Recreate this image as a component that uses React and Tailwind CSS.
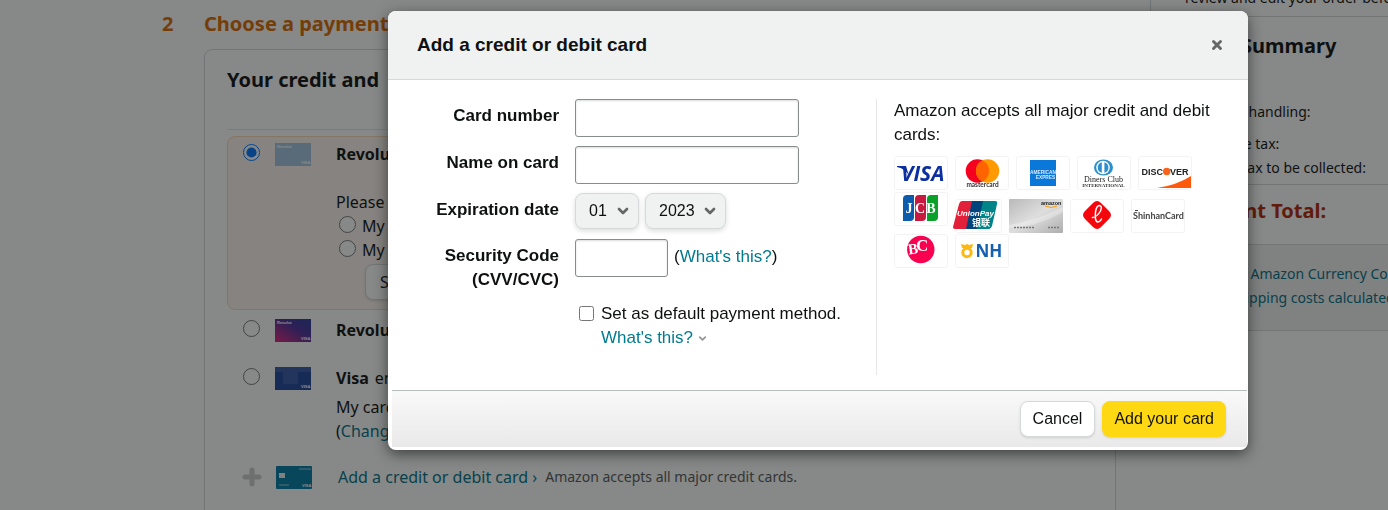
import React, { useState } from 'react';
import { ChevronDown, Plus, X } from 'lucide-react';

const Tile = ({ label, children }) => (
  <svg role="img" aria-label={label} viewBox="0 0 54 34" className="h-[34px] w-[54px] shrink-0" fontFamily="Liberation Sans, sans-serif">
    <rect x="0.5" y="0.5" width="53" height="33" rx="2" fill="#fff" stroke="#f3f3f3" />
    {children}
  </svg>
);

const VisaLogo = () => (
  <Tile label="Visa">
    <path d="M3 10h9l3 10q-3-7-12-9z" fill="#0b2fa0" />
    <text x="7" y="25" fontSize="21" fontWeight="bold" fontStyle="italic" fontFamily="Open Sans, sans-serif" fill="#0b2fa0">VISA</text>
  </Tile>
);

const MastercardLogo = () => (
  <Tile label="Mastercard">
    <circle cx="22.4" cy="15" r="11.7" fill="#f5001f" />
    <circle cx="32.6" cy="15" r="11.7" fill="#ff9a00" />
    <path d="M27.5 4.5a11.7 11.7 0 0 1 0 21a11.7 11.7 0 0 1 0-21z" fill="#ff6400" />
    <text x="27.5" y="31" fontSize="6.5" fontWeight="bold" textAnchor="middle" fontFamily="Lato, sans-serif" fill="#333">mastercard</text>
  </Tile>
);

const AmexLogo = () => (
  <Tile label="American Express">
    <rect x="14" y="4" width="26" height="26" fill="#0a78d9" />
    <text x="27" y="17.5" fontSize="4.8" fontWeight="bold" textAnchor="middle" fill="#d5eaff">AMERICAN</text>
    <text x="29.5" y="22.5" fontSize="4.8" fontWeight="bold" textAnchor="middle" fill="#d5eaff">EXPRES</text>
  </Tile>
);

const DinersLogo = () => (
  <Tile label="Diners Club International">
    <ellipse cx="26.5" cy="11.5" rx="9.5" ry="8" fill="#2b8fcd" />
    <circle cx="26" cy="11.5" r="6.8" fill="#fff" />
    <path d="M24.8 6.2a5.5 5.5 0 0 0 0 10.6zM27.4 6.2a5.5 5.5 0 0 1 0 10.6z" fill="#2b8fcd" />
    <text x="26.5" y="26" fontSize="8" textAnchor="middle" fontFamily="Liberation Serif, serif" fill="#222">Diners Club</text>
    <text x="26.5" y="31" fontSize="5" fontWeight="bold" textAnchor="middle" fontFamily="Liberation Serif, serif" fill="#333">INTERNATIONAL</text>
  </Tile>
);

const DiscoverLogo = () => (
  <Tile label="Discover">
    <path d="M53 20v12H19q20-3 34-12z" fill="#ff5a0a" />
    <circle cx="28.7" cy="15.5" r="3.7" fill="#f9631b" />
    <text x="3.5" y="19" fontSize="9" fontWeight="bold" fill="#222">DISC</text>
    <text x="32" y="19" fontSize="9" fontWeight="bold" fill="#222">VER</text>
  </Tile>
);

const JcbLogo = () => (
  <Tile label="JCB">
    <path d="M13 3h7v22q0 4-4 4H9V7q0-4 4-4z" fill="#0d5bab" />
    <path d="M25 3h7v22q0 4-4 4h-7V7q0-4 4-4z" fill="#c8193f" />
    <path d="M37 3h7v22q0 4-4 4h-7V7q0-4 4-4z" fill="#0ba02a" />
    <g fontSize="14" fontWeight="bold" textAnchor="middle" fontFamily="Liberation Serif, serif" fill="#fff">
      <text x="15" y="21">J</text>
      <text x="26" y="21">C</text>
      <text x="37" y="21">B</text>
    </g>
  </Tile>
);

// UnionPay tile is a little narrower than the others
const UnionPayLogo = () => (
  <svg role="img" aria-label="UnionPay" viewBox="0 0 47 34" className="h-[34px] w-[47px] shrink-0 overflow-visible" fontFamily="Liberation Sans, sans-serif">
    <rect x="0.5" y="0.5" width="46" height="33" rx="2" fill="#fff" stroke="#f3f3f3" />
    <path d="M7 2h12l-6 28H0q-2 0-2-2L4 5q1-3 3-3z" fill="#e3203a" />
    <path d="M17 2h14l-6 28H11z" fill="#00447c" />
    <path d="M28 2h12q3 0 2 3l-5 22q-1 3-3 3H22z" fill="#008487" />
    <text x="2" y="17" fontSize="8" fontWeight="bold" fontStyle="italic" fill="#fff">UnionPay</text>
    <text x="17" y="27" fontSize="9" fontWeight="bold" fontFamily="Noto Sans CJK SC, sans-serif" fill="#fff">银联</text>
  </svg>
);

const AmazonCardLogo = () => (
  <svg role="img" aria-label="Amazon card" viewBox="0 0 54 34" className="h-[34px] w-[54px] shrink-0" fontFamily="Liberation Sans, sans-serif">
    <defs>
      <linearGradient id="silver" x1="0" y1="0" x2="1" y2="1">
        <stop offset="0" stopColor="#b9b9b9" />
        <stop offset="0.5" stopColor="#dedede" />
        <stop offset="1" stopColor="#adadad" />
      </linearGradient>
    </defs>
    <rect width="54" height="34" rx="1" fill="url(#silver)" />
    <path d="M0 26q26-4 54-18v5q-26 15-54 16z" fill="#fff" opacity="0.3" />
    <text x="32" y="5.5" fontSize="5.5" fontWeight="bold" fill="#222">amazon</text>
    <path d="M36 7q6 3 12 0" stroke="#f90" fill="none" />
    <path d="M5 28.5h21M39 28.5h12" stroke="#777" strokeDasharray="2 1" strokeWidth="1.5" />
  </svg>
);

const LotteLogo = () => (
  <Tile label="Lotte Card">
    <path d="M23 4q4-4 8 0l8 8q4 4 0 8l-8 8q-4 4-8 0l-8-8q-4-4 0-8z" fill="#f5060d" />
    <path d="M22.5 18.5q5-1 8-6.5q2-5-1-5.500q-3 0-4 6.500q-1 9 2 10q2.500 0 4-3" stroke="#fff" strokeWidth="1.500" fill="none" strokeLinecap="round" />
  </Tile>
);

const ShinhanLogo = () => (
  <Tile label="Shinhan Card">
    <path d="M4 11.5h3" stroke="#444" />
    <text x="27.5" y="19.5" fontSize="9" fontWeight="bold" textAnchor="middle" fontFamily="Lato, sans-serif" fill="#444">ShinhanCard</text>
  </Tile>
);

const BcLogo = () => (
  <Tile label="BC Card">
    <circle cx="26.8" cy="15.5" r="13.7" fill="#fa0050" />
    <text x="14" y="20" fontSize="15" fontWeight="bold" fontFamily="Liberation Serif, serif" transform="rotate(-8 18 14)" fill="#fff">B</text>
    <text x="22" y="16.5" fontSize="17" fontWeight="bold" fontFamily="Liberation Serif, serif" fill="#fff">C</text>
  </Tile>
);

const NhLogo = () => (
  <Tile label="NH">
    <path d="M6 10l4 1 2-1 2 1 4-1-1 4H7z" fill="#fdb913" />
    <circle cx="12" cy="18.5" r="4.2" stroke="#fdb913" strokeWidth="3" fill="none" />
    <text x="20.5" y="22.5" fontSize="17" fontWeight="bold" fontFamily="Open Sans, sans-serif" fill="#1560ae">NH</text>
  </Tile>
);

// small card art shown next to every saved payment method
const CardArt = ({ kind }) => (
  <svg viewBox="0 0 36 23" className="h-[23px] w-9 shrink-0" aria-hidden="true" fontFamily="Liberation Sans, sans-serif">
    <defs>
      <linearGradient id="pink" x1="0" y1="1" x2="1" y2="0">
        <stop offset="0" stopColor="#e0207c" />
        <stop offset="0.6" stopColor="#4a2f9a" />
        <stop offset="1" stopColor="#273a9a" />
      </linearGradient>
    </defs>
    {kind === 'light' && <rect width="36" height="23" fill="#a3c5e0" />}
    {kind === 'pink' && <rect width="36" height="23" fill="url(#pink)" />}
    {kind === 'blue' && <><rect width="36" height="23" fill="#1f459c" /><path d="M0 0h36v5H0zM8 5h15v12H8z" fill="#4668ad" opacity="0.6" /></>}
    {kind === 'teal' && <><rect width="36" height="23" rx="1" fill="#007aa5" /><rect x="3" y="7" width="6" height="5" fill="#eee" /><path d="M3 19h10M23 3h12" stroke="#9cd" /></>}
    {(kind === 'light' || kind === 'pink') && <text x="2" y="5" fontSize="4" fontWeight="bold" fill="#fff">Revolut</text>}
    <text x="26" y="21" fontSize="4" fontWeight="bold" fill="#fff">VISA</text>
  </svg>
);

const Radio = (props) => <input type="radio" className="mb-1 size-[17px] shrink-0" {...props} />;

const PaymentPage = () => (
  <div className="flex h-screen overflow-hidden whitespace-nowrap bg-white font-['Noto_Sans',sans-serif] text-base leading-6 text-[#0f1111]">
    <main className="flex min-w-0 flex-1 pl-[162px]">
      <div className="w-[42px] shrink-0 pt-2 text-xl font-bold leading-8 text-[#d96a00]">2</div>
      <section className="min-w-0 flex-1">
        <h1 className="pt-2 text-xl font-bold leading-8 text-[#d96a00]">Choose a payment method</h1>
        <div className="mt-[9px] h-[600px] rounded-lg border border-[#d5d9d9] px-[22px] pt-[14px]">
          <h2 className="border-b border-[#e7e7e7] pb-[33px] text-xl font-bold leading-8">Your credit and <span className="ml-1">debit cards</span></h2>
          <div className="mt-[6px] h-[174px] rounded-lg border border-[#fbd8b4] bg-[#fcf5ee] px-[15px] pt-[5px]">
            <label className="flex items-center">
              <Radio name="method" defaultChecked />
              <span className="ml-[15px] flex w-[61px]"><CardArt kind="light" /></span>
              <b>Revolut Visa</b>
            </label>
            <div className="ml-[93px] mt-6">
              <p>Please select a currency</p>
              <label className="ml-[3px] flex items-center gap-[6px]"><Radio name="currency" /> My card currency</label>
              <label className="ml-[3px] flex items-center gap-[6px]"><Radio name="currency" /> My local currency</label>
              <button className="ml-[29px] mt-0.5 h-9 rounded-lg border border-[#d5d9d9] bg-white px-[14px] shadow">Save</button>
            </div>
          </div>
          <label className="ml-4 mt-2 flex items-center">
            <Radio name="method" />
            <span className="ml-[15px] flex w-[61px]"><CardArt kind="pink" /></span>
            <b>Revolut Visa</b>
          </label>
          <label className="ml-4 mt-6 flex items-center">
            <Radio name="method" />
            <span className="ml-[15px] flex w-[61px]"><CardArt kind="blue" /></span>
            <b>Visa</b>
            <span className="ml-[6px]">ending in</span>
          </label>
          <div className="ml-[109px] mt-[5px]">
            <p>My card currency</p>
            <p>(<a href="#" className="text-[#007185]">Change</a>)</p>
          </div>
          <div className="ml-[13px] mt-[22px] flex items-center">
            <Plus className="size-6 text-[#ccc]" strokeWidth={5} />
            <span className="ml-3 flex w-[62px]"><CardArt kind="teal" /></span>
            <a href="#" className="text-[#007185]">Add a credit or debit card ›</a>
            <span className="ml-2 text-sm leading-6 text-[#565959]">Amazon accepts all major credit cards.</span>
          </div>
        </div>
      </section>
    </main>
    <aside className="ml-[34px] h-[331px] w-[238px] shrink-0 overflow-hidden border-b border-l border-[#d5d9d9] text-sm leading-6">
      <p className="-mt-[14px] h-[31px] border-b border-[#d5d9d9] pl-[34px]">review and edit your order before</p>
      <div className="h-[168px] border-b border-[#d5d9d9] pl-[22px] pt-[13px]">
        <h2 className="pl-[5px] text-xl font-bold leading-8">Order Summary</h2>
        <p className="mt-[38px]">Shipping &amp; handling:</p>
        <p className="mt-2">Total before tax:</p>
        <p>Estimated tax to be collected:</p>
      </div>
      <p className="h-[59px] pl-[26px] pt-[10px] text-xl font-bold leading-8 text-[#b12704]">Payment Total:</p>
      <div className="h-[87px] border-t border-[#d5d9d9] bg-[#f0f2f2] pl-4 pt-[17px] text-[#007185]">
        <a href="#" className="block">Learn about Amazon Currency Converter</a>
        <a href="#" className="block pl-[5px]">How are shipping costs calculated?</a>
      </div>
    </aside>
  </div>
);

const Select = ({ label, options, width }) => (
  <span className={`relative flex h-9 items-center ${width}`}>
    <select aria-label={label} className="h-9 w-full appearance-none rounded-lg border border-[#d5d9d9] bg-[#f0f2f2] pl-[13px] text-base text-[#0f1111] shadow-[0_2px_5px_rgba(15,17,17,0.15)]">
      {options.map((option) => <option key={option}>{option}</option>)}
    </select>
    <ChevronDown className="pointer-events-none absolute right-2 size-4 text-[#666]" strokeWidth={4} />
  </span>
);

const inputClass = 'rounded-[3px] border border-[#888c8c] bg-white px-2 shadow-[0_1px_2px_rgba(15,17,17,0.15)_inset]';

const AddCardModal = ({ onClose }) => (
  <div className="fixed inset-0 flex items-start bg-[#0f1111]/50 pl-[388px] pr-[140px] pt-[11px] font-['Liberation_Sans',Arial,sans-serif] text-[17px] leading-6 text-[#0f1111]">
    <div role="dialog" aria-labelledby="modal-title" className="flex-1 overflow-hidden rounded-lg bg-white shadow-[0_4px_14px_rgba(15,17,17,0.6)]">
      <header className="flex items-center justify-between border-b border-[#d5d9d9] bg-[#f0f2f2] py-[22px] pl-[29px] pr-6">
        <h2 id="modal-title" className="text-[19px] font-bold leading-6">Add a credit or debit card</h2>
        <button aria-label="Close" onClick={onClose}><X className="size-[14px] text-[#666]" strokeWidth={5} /></button>
      </header>
      <div className="flex h-[310px] pt-[19px]">
        <form className="w-[488px] shrink-0">
          <div className="grid grid-cols-[171px_1fr] gap-x-4 gap-y-[9px]">
            <label htmlFor="number" className="pt-[5px] text-right font-bold">Card number</label>
            <input id="number" className={`${inputClass} h-[38px] w-[224px]`} />
            <label htmlFor="name" className="pt-[5px] text-right font-bold">Name on card</label>
            <input id="name" className={`${inputClass} h-[38px] w-[224px]`} />
            <span className="pt-[5px] text-right font-bold">Expiration date</span>
            <div className="flex h-[37px] items-start gap-[6px]">
              <Select label="Month" options={['01', '02', '03']} width="w-16" />
              <Select label="Year" options={['2023', '2024', '2025']} width="w-[81px]" />
            </div>
            <label htmlFor="code" className="pt-[5px] text-right font-bold">Security Code<br />(CVV/CVC)</label>
            <div className="flex gap-[6px]">
              <input id="code" className={`${inputClass} h-[38px] w-[93px]`} />
              <span className="pt-[6px]">(<a href="#" className="text-[#007b90]">What's this?</a>)</span>
            </div>
          </div>
          <div className="ml-[191px] mt-[10px] flex items-start gap-[7px]">
            <input id="default" type="checkbox" className="mt-1 size-[15px]" />
            <div>
              <label htmlFor="default">Set as default payment method.</label>
              <a href="#" className="flex items-center gap-1 text-[#007b90]">What's this? <ChevronDown className="size-[11px] text-[#999]" strokeWidth={4} /></a>
            </div>
          </div>
        </form>
        <div className="mb-[15px] flex-1 border-l border-[#e7e7e7] pl-[17px] pr-6">
          <p>Amazon accepts all major credit and debit cards:</p>
          <div className="mt-[9px] flex gap-[7px]">
            <VisaLogo />
            <MastercardLogo />
            <AmexLogo />
            <DinersLogo />
            <DiscoverLogo />
          </div>
          <div className="mt-0.5 flex gap-[7px]">
            <JcbLogo />
            <div className="flex gap-[7px] pt-[7px]">
              <UnionPayLogo />
              <AmazonCardLogo />
              <LotteLogo />
              <ShinhanLogo />
            </div>
          </div>
          <div className="mt-px flex gap-[7px]">
            <BcLogo />
            <NhLogo />
          </div>
        </div>
      </div>
      <footer className="mb-[3px] ml-1 mr-px flex justify-end gap-[7px] border-t border-[#b8bdbd] bg-linear-to-b from-[#f9f9f9] to-[#e9e9e9] px-[21px] py-[10px] text-base">
        <button onClick={onClose} className="h-9 rounded-lg border border-[#d5d9d9] bg-white px-3 shadow-sm">Cancel</button>
        <button className="h-9 rounded-lg bg-[#ffd814] px-3 shadow-sm">Add your card</button>
      </footer>
    </div>
  </div>
);

const App = () => {
  const [open, setOpen] = useState(true);

  return (
    <>
      <PaymentPage />
      {open && <AddCardModal onClose={() => setOpen(false)} />}
    </>
  );
};

export default App;
